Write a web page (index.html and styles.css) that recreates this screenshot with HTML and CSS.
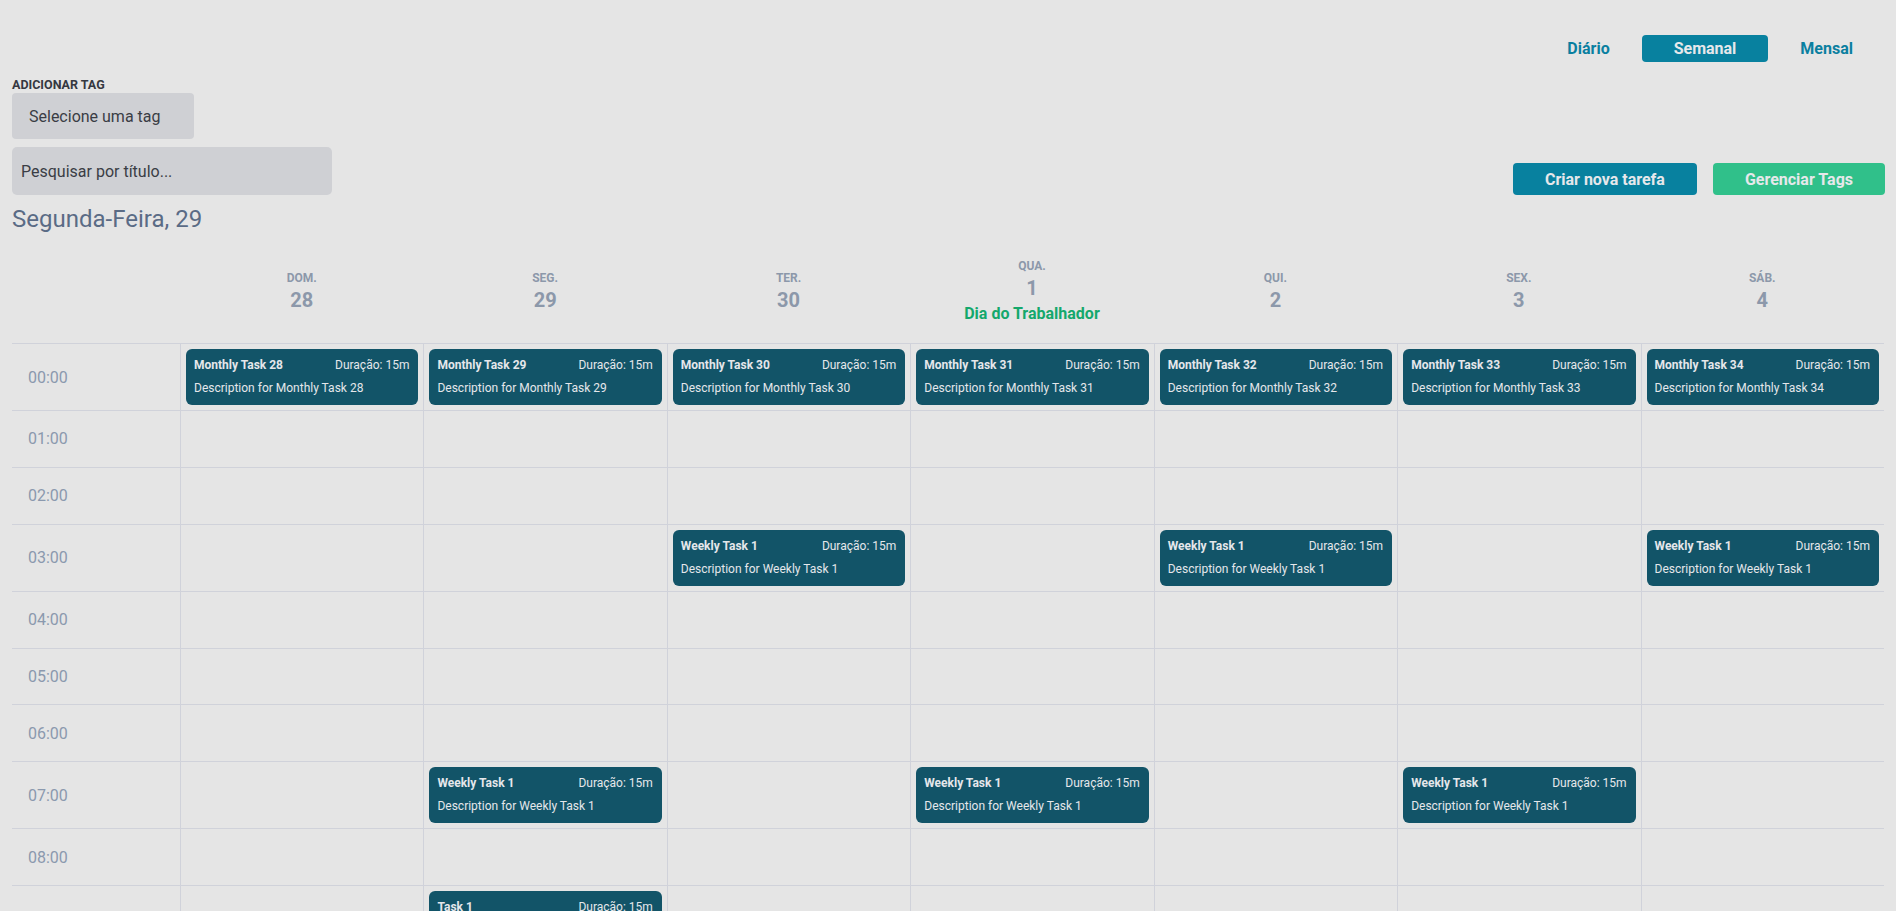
FILE: index.html
```html
<!DOCTYPE html>
<html lang="pt-BR">
<head>
<meta charset="utf-8">
<title>Calendário semanal</title>
<link rel="stylesheet" href="styles.css">
</head>
<body>
<div class="page">
  <nav class="views">
    <button class="view">Diário</button>
    <button class="view active">Semanal</button>
    <button class="view">Mensal</button>
  </nav>

  <div class="tag-label">ADICIONAR TAG</div>
  <div class="tag-select">Selecione uma tag</div>

  <div class="toolbar">
    <input class="search" type="text" placeholder="Pesquisar por título...">
    <div class="actions">
      <button class="btn btn-blue">Criar nova tarefa</button>
      <button class="btn btn-green">Gerenciar Tags</button>
    </div>
  </div>

  <h2 class="current-day">Segunda-Feira, 29</h2>

  <div class="calendar">
    <div class="head-row">
      <div class="head-time"></div>
      <div class="head-day"><span class="dname">DOM.</span><span class="dnum">28</span></div>
      <div class="head-day"><span class="dname">SEG.</span><span class="dnum">29</span></div>
      <div class="head-day"><span class="dname">TER.</span><span class="dnum">30</span></div>
      <div class="head-day"><span class="dname">QUA.</span><span class="dnum">1</span><span class="holiday">Dia do Trabalhador</span></div>
      <div class="head-day"><span class="dname">QUI.</span><span class="dnum">2</span></div>
      <div class="head-day"><span class="dname">SEX.</span><span class="dnum">3</span></div>
      <div class="head-day"><span class="dname">SÁB.</span><span class="dnum">4</span></div>
    </div>

    <div class="row">
      <div class="time">00:00</div>
      <div class="cell"><div class="task"><div class="task-top"><span class="task-title">Monthly Task 28</span><span class="task-dur">Duração: 15m</span></div><div class="task-desc">Description for Monthly Task 28</div></div></div>
      <div class="cell"><div class="task"><div class="task-top"><span class="task-title">Monthly Task 29</span><span class="task-dur">Duração: 15m</span></div><div class="task-desc">Description for Monthly Task 29</div></div></div>
      <div class="cell"><div class="task"><div class="task-top"><span class="task-title">Monthly Task 30</span><span class="task-dur">Duração: 15m</span></div><div class="task-desc">Description for Monthly Task 30</div></div></div>
      <div class="cell"><div class="task"><div class="task-top"><span class="task-title">Monthly Task 31</span><span class="task-dur">Duração: 15m</span></div><div class="task-desc">Description for Monthly Task 31</div></div></div>
      <div class="cell"><div class="task"><div class="task-top"><span class="task-title">Monthly Task 32</span><span class="task-dur">Duração: 15m</span></div><div class="task-desc">Description for Monthly Task 32</div></div></div>
      <div class="cell"><div class="task"><div class="task-top"><span class="task-title">Monthly Task 33</span><span class="task-dur">Duração: 15m</span></div><div class="task-desc">Description for Monthly Task 33</div></div></div>
      <div class="cell"><div class="task"><div class="task-top"><span class="task-title">Monthly Task 34</span><span class="task-dur">Duração: 15m</span></div><div class="task-desc">Description for Monthly Task 34</div></div></div>
    </div>

    <div class="row">
      <div class="time">01:00</div>
      <div class="cell"></div><div class="cell"></div><div class="cell"></div><div class="cell"></div><div class="cell"></div><div class="cell"></div><div class="cell"></div>
    </div>

    <div class="row">
      <div class="time">02:00</div>
      <div class="cell"></div><div class="cell"></div><div class="cell"></div><div class="cell"></div><div class="cell"></div><div class="cell"></div><div class="cell"></div>
    </div>

    <div class="row">
      <div class="time">03:00</div>
      <div class="cell"></div>
      <div class="cell"></div>
      <div class="cell"><div class="task"><div class="task-top"><span class="task-title">Weekly Task 1</span><span class="task-dur">Duração: 15m</span></div><div class="task-desc">Description for Weekly Task 1</div></div></div>
      <div class="cell"></div>
      <div class="cell"><div class="task"><div class="task-top"><span class="task-title">Weekly Task 1</span><span class="task-dur">Duração: 15m</span></div><div class="task-desc">Description for Weekly Task 1</div></div></div>
      <div class="cell"></div>
      <div class="cell"><div class="task"><div class="task-top"><span class="task-title">Weekly Task 1</span><span class="task-dur">Duração: 15m</span></div><div class="task-desc">Description for Weekly Task 1</div></div></div>
    </div>

    <div class="row">
      <div class="time">04:00</div>
      <div class="cell"></div><div class="cell"></div><div class="cell"></div><div class="cell"></div><div class="cell"></div><div class="cell"></div><div class="cell"></div>
    </div>

    <div class="row">
      <div class="time">05:00</div>
      <div class="cell"></div><div class="cell"></div><div class="cell"></div><div class="cell"></div><div class="cell"></div><div class="cell"></div><div class="cell"></div>
    </div>

    <div class="row">
      <div class="time">06:00</div>
      <div class="cell"></div><div class="cell"></div><div class="cell"></div><div class="cell"></div><div class="cell"></div><div class="cell"></div><div class="cell"></div>
    </div>

    <div class="row">
      <div class="time">07:00</div>
      <div class="cell"></div>
      <div class="cell"><div class="task"><div class="task-top"><span class="task-title">Weekly Task 1</span><span class="task-dur">Duração: 15m</span></div><div class="task-desc">Description for Weekly Task 1</div></div></div>
      <div class="cell"></div>
      <div class="cell"><div class="task"><div class="task-top"><span class="task-title">Weekly Task 1</span><span class="task-dur">Duração: 15m</span></div><div class="task-desc">Description for Weekly Task 1</div></div></div>
      <div class="cell"></div>
      <div class="cell"><div class="task"><div class="task-top"><span class="task-title">Weekly Task 1</span><span class="task-dur">Duração: 15m</span></div><div class="task-desc">Description for Weekly Task 1</div></div></div>
      <div class="cell"></div>
    </div>

    <div class="row">
      <div class="time">08:00</div>
      <div class="cell"></div><div class="cell"></div><div class="cell"></div><div class="cell"></div><div class="cell"></div><div class="cell"></div><div class="cell"></div>
    </div>

    <div class="row">
      <div class="time">09:00</div>
      <div class="cell"></div>
      <div class="cell"><div class="task"><div class="task-top"><span class="task-title">Task 1</span><span class="task-dur">Duração: 15m</span></div><div class="task-desc">Description for Task 1</div></div></div>
      <div class="cell"></div><div class="cell"></div><div class="cell"></div><div class="cell"></div><div class="cell"></div>
    </div>

    <div class="row">
      <div class="time">10:00</div>
      <div class="cell"></div><div class="cell"></div><div class="cell"></div><div class="cell"></div><div class="cell"></div><div class="cell"></div><div class="cell"></div>
    </div>

    <div class="row">
      <div class="time">11:00</div>
      <div class="cell"></div><div class="cell"></div><div class="cell"></div><div class="cell"></div><div class="cell"></div><div class="cell"></div><div class="cell"></div>
    </div>
  </div>
</div>
</body>
</html>
```

FILE: styles.css
```css
* { box-sizing: border-box; }

html, body {
  margin: 0;
  padding: 0;
  background: #e5e5e5;
  font-family: Roboto, "Liberation Sans", Arial, sans-serif;
  color: #3a3d45;
}

.page {
  padding: 35px 12px 0;
}

/* view switcher */
.views {
  display: flex;
  justify-content: flex-end;
  height: 27px;
  margin-right: -1px;
}
.view {
  font-family: inherit;
  font-size: 16px;
  font-weight: 700;
  line-height: 19px;
  padding: 4px 32px;
  border: 0;
  border-radius: 4px;
  background: transparent;
  color: #0a7fa0;
  cursor: pointer;
}
.view.active {
  background: #08819f;
  color: #e6e8eb;
}

/* tag select */
.tag-label {
  margin-top: 15px;
  font-size: 12.5px;
  font-weight: 700;
  line-height: 16px;
  color: #353841;
}
.tag-select {
  width: 182px;
  height: 46px;
  display: flex;
  align-items: center;
  padding-left: 17px;
  background: #cfd0d4;
  border-radius: 4px;
  font-size: 16px;
  color: #3a3d45;
}

/* toolbar */
.toolbar {
  margin-top: 8px;
  display: flex;
  justify-content: space-between;
  align-items: flex-end;
}
.search {
  width: 320px;
  height: 48px;
  padding: 0 9px;
  border: 0;
  border-radius: 5px;
  background: #cfd0d4;
  font-family: inherit;
  font-size: 16px;
  color: #3a3d45;
  outline: none;
}
.search::placeholder {
  color: #3a3d45;
  opacity: 1;
}
.actions {
  display: flex;
  gap: 16px;
  margin-right: -1px;
}
.btn {
  height: 32px;
  padding: 0 32px;
  border: 0;
  border-radius: 4px;
  font-family: inherit;
  font-size: 16px;
  font-weight: 700;
  color: #e6e8eb;
  cursor: pointer;
}
.btn-blue { background: #08819f; }
.btn-green { background: #30c08a; }

.current-day {
  margin: 8px 0 0;
  font-size: 24px;
  font-weight: 400;
  line-height: 32px;
  color: #5a6b85;
}

/* calendar */
.head-row,
.row {
  display: grid;
  grid-template-columns: 168px repeat(7, 1fr);
}
.head-row {
  height: 108px;
  padding-top: 6px;
}
.head-day {
  display: flex;
  flex-direction: column;
  align-items: center;
  justify-content: center;
  color: #8c98aa;
}
.dname {
  font-size: 12px;
  font-weight: 700;
  line-height: 16px;
}
.dnum {
  font-size: 20px;
  font-weight: 700;
  line-height: 28px;
}
.holiday {
  font-size: 16px;
  font-weight: 700;
  line-height: 24px;
  color: #14a86c;
}

.row {
  border-top: 1px solid #d0d2da;
}
.time {
  display: flex;
  align-items: center;
  padding-left: 16px;
  font-size: 16px;
  color: #8b99ae;
}
.cell {
  min-height: 55.85px;
  padding: 5px;
  border-left: 1px solid #d0d2da;
}

.task {
  height: 56px;
  padding: 8px 9px 0 8px;
  border-radius: 6px;
  background: #125468;
  color: #e5e7eb;
}
.task-top {
  display: flex;
  justify-content: space-between;
  font-size: 12px;
  line-height: 16px;
}
.task-title {
  font-weight: 700;
}
.task-desc {
  margin-top: 7px;
  font-size: 12px;
  line-height: 16px;
}
```
